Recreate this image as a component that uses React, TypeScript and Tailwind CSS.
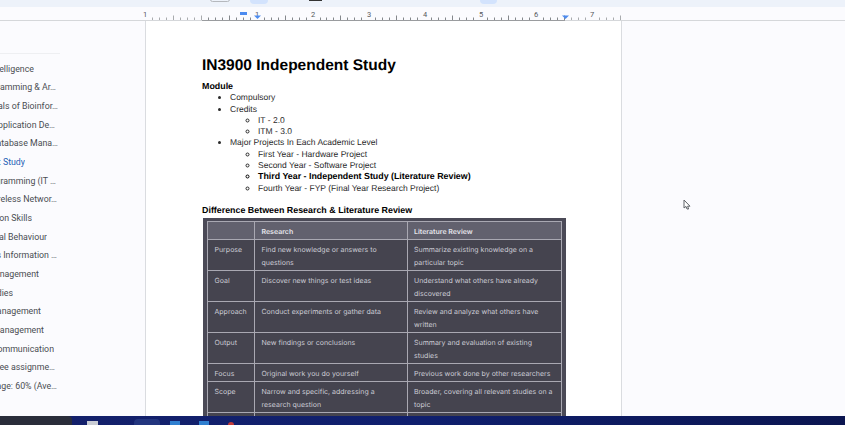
import React from 'react';

const outline = [
  { text: 'Artificial Intelligence', end: 34 },
  { text: 'Programming & Ar…', end: 56 },
  { text: 'Fundamentals of Bioinfor…', end: 58 },
  { text: 'Web Application De…', end: 55 },
  { text: 'Database Mana…', end: 58 },
  { text: 'Independent Study', end: 25, active: true },
  { text: 'Programming (IT …', end: 56 },
  { text: 'Wireless Networ…', end: 57 },
  { text: 'Communication Skills', end: 32 },
  { text: 'Organizational Behaviour', end: 47 },
  { text: 'Business Information …', end: 57 },
  { text: 'Project Management', end: 39 },
  { text: 'Studies', end: 13 },
  { text: 'Quality Management', end: 41 },
  { text: 'Risk Management', end: 44 },
  { text: 'Communication', end: 54 },
  { text: 'Three assignme…', end: 55 },
  { text: 'Average: 60% (Ave…', end: 57 },
];

const rows = [
  { name: 'Purpose', research: 'Find new knowledge or answers to questions', review: 'Summarize existing knowledge on a particular topic', height: 'h-[31px]' },
  { name: 'Goal', research: 'Discover new things or test ideas', review: 'Understand what others have already discovered', height: 'h-[31px]' },
  { name: 'Approach', research: 'Conduct experiments or gather data', review: 'Review and analyze what others have written', height: 'h-[31px]' },
  { name: 'Output', research: 'New findings or conclusions', review: 'Summary and evaluation of existing studies', height: 'h-[31px]' },
  { name: 'Focus', research: 'Original work you do yourself', review: 'Previous work done by other researchers', height: 'h-[18px]' },
  { name: 'Scope', research: 'Narrow and specific, addressing a research question', review: 'Broader, covering all relevant studies on a topic', height: 'h-[31px]' },
  { name: '', research: '', review: '', height: 'h-[31px]' },
];

const rulerLabels = [
  { x: 145, label: '1' },
  { x: 257, label: '1' },
  { x: 313, label: '2' },
  { x: 369, label: '3' },
  { x: 425, label: '4' },
  { x: 481, label: '5' },
  { x: 536, label: '6' },
  { x: 592, label: '7' },
];

const Ruler = () => {
  const ticks = [];
  for (let i = 0; i <= 68; i++) {
    const x = Math.round(145 + i * 6.98) + 0.5;
    const labelled = i % 8 === 0 && i !== 8;
    const mid = i % 4 === 0;
    if (labelled) continue;
    ticks.push(
      <line key={i} x1={x} x2={x} y1={mid ? 15.5 : 17.5} y2={20} stroke={x > 202 && x < 565 ? '#85888c' : '#a9abae'} strokeWidth="1" />
    );
  }
  return (
    <svg width="845" height="21" className="block">
      <line x1="0" x2="845" y1="20.5" y2="20.5" stroke="#d5d7da" />
      <line x1="202" x2="565" y1="20.5" y2="20.5" stroke="#9a9c9f" />
      {ticks}
      {rulerLabels.map((l, i) => (
        <text key={i} x={l.x} y="17" textAnchor="middle" fontSize="7.5" fill="#55585c" fontFamily="Roboto, sans-serif">
          {l.label}
        </text>
      ))}
      <rect x="240" y="12" width="7" height="3" fill="#4c8bf0" />
      <path d="M254 15.5h7l-3.5 3.5z" fill="#4c8bf0" />
      <path d="M562 15.5h7l-3.5 3.5z" fill="#4c8bf0" />
    </svg>
  );
};

export default function App() {
  return (
    <div className="relative flex h-[425px] w-[845px] flex-col overflow-hidden bg-[#fbfbfe] font-['Liberation_Sans',sans-serif] opacity-[0.999]">
      {/* Toolbar remainder */}
      <div className="relative h-[7px] shrink-0 bg-[#edf2fa]">
        <div className="absolute left-[210px] top-[-3px] h-[5px] w-[20px] rounded border border-[#b5b8bd]" />
        <div className="absolute left-[250px] top-0 h-[4px] w-[18px] rounded-b bg-[#d3e3fd]" />
        <div className="absolute left-[309px] top-0 h-px w-[13px] bg-[#333333]" />
        <div className="absolute left-[480px] top-0 h-[4px] w-[17px] rounded-b bg-[#d3e3fd]" />
      </div>

      <div className="h-[14px] shrink-0 overflow-hidden">
        <div className="mt-[-7px]">
          <Ruler />
        </div>
      </div>

      <div className="flex min-h-0 flex-1">
        {/* Outline panel */}
        <div className="w-[145px] shrink-0 overflow-hidden pt-[32px]">
          <div className="mb-[6px] h-px w-[60px] bg-[#eeeff2]" />
          <div className="flex flex-col font-['Roboto',sans-serif] text-[8.8px]">
            {outline.map((item) => (
              <div
                key={item.text}
                style={{ width: item.end }}
                className={`flex h-[18.68px] items-center justify-end overflow-hidden whitespace-nowrap ${item.active ? 'text-[#1f5fb5]' : 'text-[#4a4d52]'}`}
              >
                {item.text}
              </div>
            ))}
          </div>
        </div>

        {/* Document page */}
        <div className="w-[477px] shrink-0 overflow-hidden border-x border-[#dadce0] bg-white pl-[56px] pt-[35px] text-[8.5px] leading-[11.3px] text-[#2a2a2a] [text-rendering:geometricPrecision]">
          <h1 className="mb-[6px] text-[15.5px] font-bold leading-[19px] text-black">IN3900 Independent Study</h1>
          <p className="text-[8.9px] font-bold text-black">Module</p>
          <ul className="list-disc pl-[28px]">
            <li>Compulsory</li>
            <li>
              Credits
              <ul className="list-[circle] pl-[28px]">
                <li>IT - 2.0</li>
                <li>ITM - 3.0</li>
              </ul>
            </li>
            <li>
              Major Projects In Each Academic Level
              <ul className="list-[circle] pl-[28px]">
                <li>First Year - Hardware Project</li>
                <li>Second Year - Software Project</li>
                <li className="text-[8.85px] font-bold text-black">Third Year - Independent Study (Literature Review)</li>
                <li>Fourth Year - FYP (Final Year Research Project)</li>
              </ul>
            </li>
          </ul>
          <p className="mt-[11px] text-[8.9px] font-bold text-black">Difference Between Research &amp; Literature Review</p>

          {/* Pasted table */}
          <div className="ml-px mt-[2px] w-[363px] bg-[#4b4a57] px-[4px] pt-[3px] font-['Inter',sans-serif] text-[7px] leading-[13px] text-[#cbcbd4]">
            <table className="w-[355px] table-fixed border-collapse">
              <thead>
                <tr className="h-[18px] bg-[#62616e] font-semibold text-[#e6e6ec]">
                  <th className="w-[47px] border border-[#a9a8b2]" />
                  <th className="w-[153px] border border-[#a9a8b2] px-[6.5px] pt-px text-left font-semibold">Research</th>
                  <th className="border border-[#a9a8b2] px-[6px] pt-px text-left font-semibold">Literature Review</th>
                </tr>
              </thead>
              <tbody>
                {rows.map((row, i) => (
                  <tr key={i} className={`${row.height} bg-[#45444f]`}>
                    <td className="border border-[#a9a8b2] px-[6.5px] pt-[3px] align-top">{row.name}</td>
                    <td className="border border-[#a9a8b2] px-[6.5px] pt-[3px] align-top">{row.research}</td>
                    <td className="border border-[#a9a8b2] px-[6px] pt-[3px] align-top">{row.review}</td>
                  </tr>
                ))}
              </tbody>
            </table>
          </div>
        </div>

        <div className="flex-1" />
      </div>

      {/* Taskbar */}
      <div className="relative h-[9px] shrink-0 bg-gradient-to-r from-[#14206a] via-[#0f1f6e] to-[#0b1550]">
        <div className="absolute left-0 top-0 h-[9px] w-[72px] rounded-tr bg-[#2a2d3a]" />
        <div className="absolute left-[134px] top-[3px] h-[6px] w-[26px] rounded-t bg-[#22357e]" />
        <div className="absolute left-[87px] top-[5px] h-[4px] w-[11px] bg-[#c9ccd4]" />
        <div className="absolute left-[170px] top-[5px] h-[4px] w-[10px] bg-[#2f7fd0]" />
        <div className="absolute left-[199px] top-[5px] h-[4px] w-[10px] bg-[#2f7fd0]" />
        <div className="absolute left-[228px] top-[6px] h-[3px] w-[6px] rounded-t bg-[#c23a3a]" />
      </div>

      {/* Mouse pointer */}
      <svg width="8" height="12" viewBox="0 0 8 12" className="absolute left-[683px] top-[199px]">
        <path d="M1 1v8l2-1.6 1 2.6h1.6l-1-2.8H7z" fill="#ffffff" stroke="#5f6368" strokeWidth="1" />
      </svg>
    </div>
  );
}
